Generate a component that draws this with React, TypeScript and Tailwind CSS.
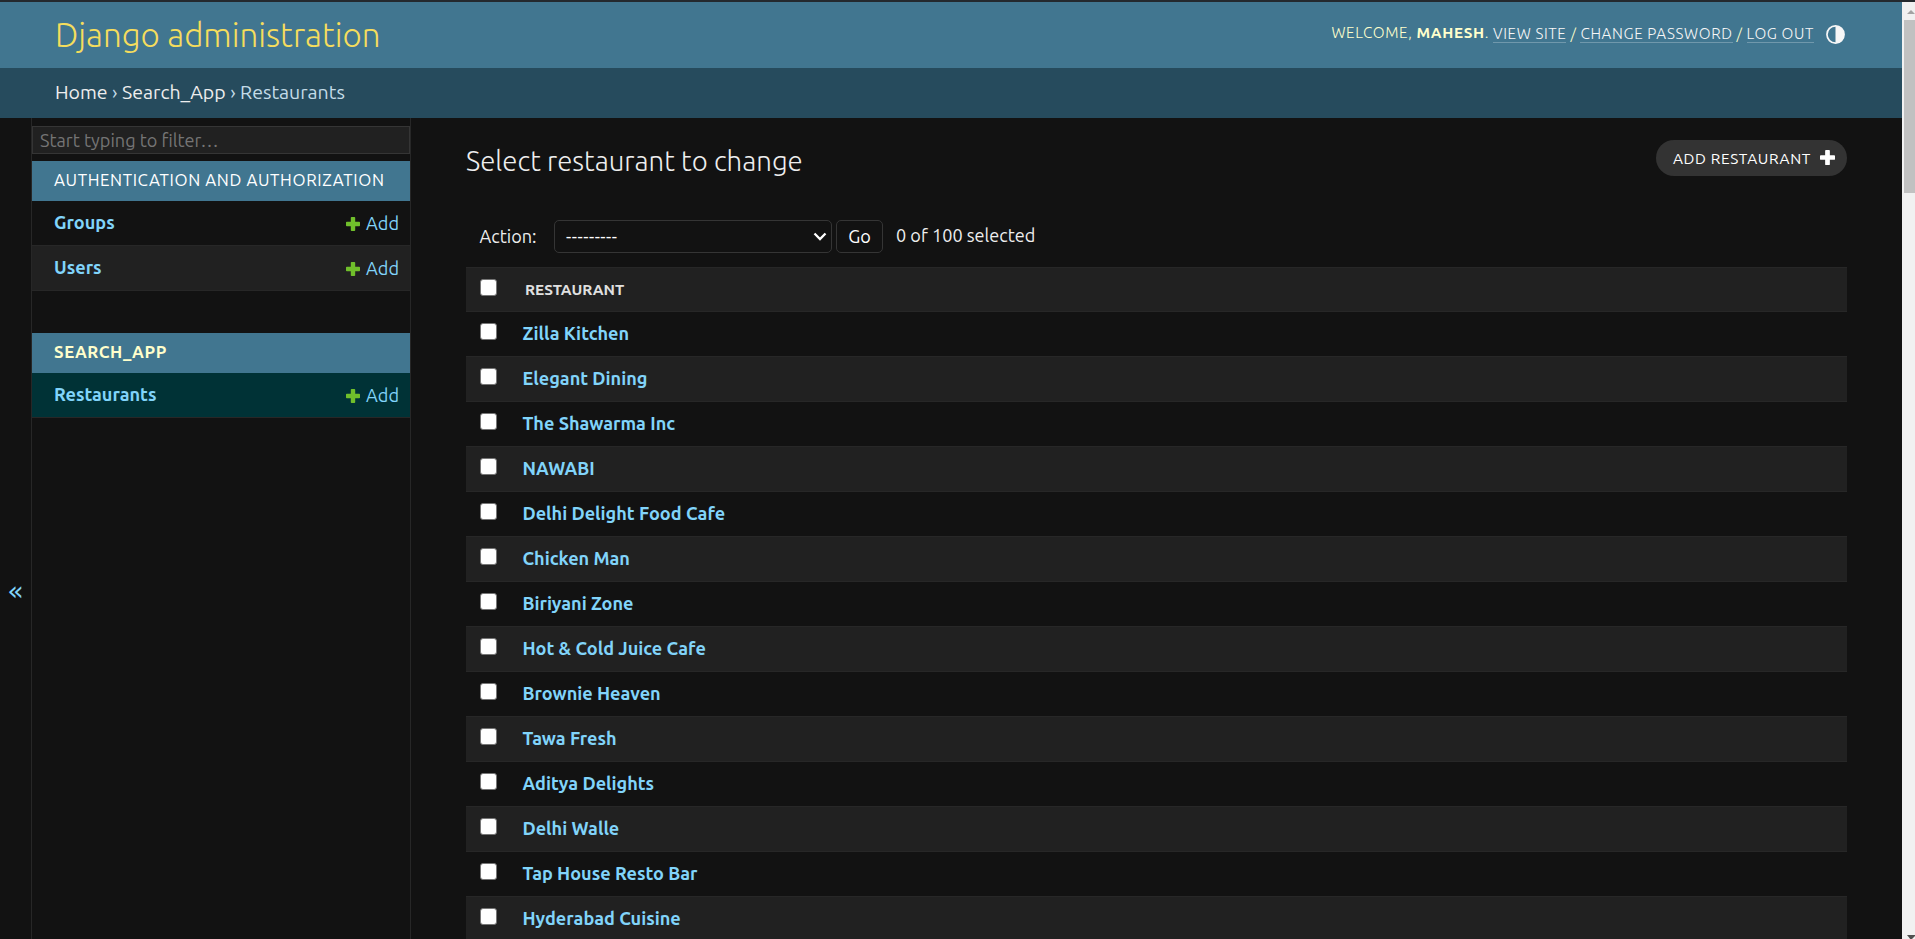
const restaurants = [
  "Zilla Kitchen",
  "Elegant Dining",
  "The Shawarma Inc",
  "NAWABI",
  "Delhi Delight Food Cafe",
  "Chicken Man",
  "Biriyani Zone",
  "Hot & Cold Juice Cafe",
  "Brownie Heaven",
  "Tawa Fresh",
  "Aditya Delights",
  "Delhi Walle",
  "Tap House Resto Bar",
  "Hyderabad Cuisine",
];

function PlusIcon({ className }: { className: string }) {
  return (
    <svg viewBox="0 0 14 14" className={className} aria-hidden="true">
      <path
        fill="currentColor"
        d="M5.6 0h2.8a.8.8 0 0 1 .8.8v4h4a.8.8 0 0 1 .8.8v2.8a.8.8 0 0 1-.8.8h-4v4a.8.8 0 0 1-.8.8H5.6a.8.8 0 0 1-.8-.8v-4h-4a.8.8 0 0 1-.8-.8V5.6a.8.8 0 0 1 .8-.8h4v-4a.8.8 0 0 1 .8-.8z"
      />
    </svg>
  );
}

function Checkbox() {
  return (
    <input
      type="checkbox"
      className="mb-[4px] block size-[17px] shrink-0 appearance-none rounded-[3px] border border-[#767676] bg-white"
    />
  );
}

function ModelRow({ name, className }: { name: string; className: string }) {
  return (
    <div className={`flex h-[45px] items-center border-b border-[#272727] pr-[11px] pl-[22px] text-[#81d4fa] ${className}`}>
      <a className="grow text-[18.1px] font-bold">{name}</a>
      <a className="flex items-center gap-[6px] text-[18.1px]">
        <PlusIcon className="mt-[2px] size-[14px] text-[#70bf2b]" />
        <span className="mt-[2px]">Add</span>
      </a>
    </div>
  );
}

function Header() {
  const link = "border-b border-white/25 leading-[16px] text-[#f7f7f7]";
  return (
    <header className="flex h-[66px] items-center justify-between bg-[#417690] pr-[57px] pl-[55px]">
      <h1 className="pb-[1px] text-[33.15px] font-light text-[#f5dd5d]">Django administration</h1>
      <div className="flex items-center pb-[2px] text-[15.3px] font-light tracking-[0.625px] text-[#ffc]">
        <span>
          WELCOME, <strong className="font-bold">MAHESH</strong>.
        </span>
        <nav className="ml-[4px] flex gap-[4px] pt-[1px] leading-[16px]">
          <a className={link}>VIEW SITE</a>
          <span>/</span>
          <a className={link}>CHANGE PASSWORD</a>
          <span>/</span>
          <a className={link}>LOG OUT</a>
        </nav>
        <svg viewBox="0 0 20 20" className="mt-[1px] ml-[12px] size-[19px]" aria-hidden="true">
          <circle cx="10" cy="10" r="9" fill="none" stroke="#f7f7f7" strokeWidth="1.8" />
          <path d="M10 1a9 9 0 0 1 0 18z" fill="#f7f7f7" />
        </svg>
      </div>
    </header>
  );
}

function Sidebar() {
  return (
    <aside className="flex shrink-0">
      <button className="w-[31px] pt-[125px] font-['DejaVu_Sans',sans-serif] text-[27px] leading-none text-[#81d4fa]">«</button>
      <div className="w-[380px] border-x border-[#272727] pt-[8px]">
        <input
          placeholder="Start typing to filter…"
          className="block h-[28px] w-full border border-[#353535] bg-[#212121] px-[7px] text-[18.1px] placeholder:text-[#757575]"
        />
        <h2 className="mt-[7px] flex h-[40px] items-center bg-[#417690] pb-[2px] pl-[22px] text-[16.83px] tracking-[0.625px] text-white">
          AUTHENTICATION AND AUTHORIZATION
        </h2>
        <ModelRow name="Groups" className="bg-[#121212]" />
        <ModelRow name="Users" className="bg-[#212121]" />
        <h2 className="mt-[42px] flex h-[40px] items-center bg-[#417690] pb-[2px] pl-[22px] text-[16.83px] font-bold tracking-[0.625px] text-[#ffc]">
          SEARCH_APP
        </h2>
        <ModelRow name="Restaurants" className="bg-[#003236]" />
      </div>
    </aside>
  );
}

function Changelist() {
  return (
    <main className="min-w-0 grow pt-[22px] pr-[55px] pl-[55px]">
      <div className="flex h-[80px] items-start justify-between">
        <h2 className="mt-[2px] text-[27.6px] leading-[38px] font-light text-[#eee]">Select restaurant to change</h2>
        <a className="flex h-[36px] items-center gap-[9px] rounded-full bg-[#333] pr-[12px] pl-[17px] text-[15.4px] tracking-[0.625px] text-white">
          <span className="pt-[1px]">ADD RESTAURANT</span>
          <PlusIcon className="mb-[1px] size-[15px]" />
        </a>
      </div>
      <div className="flex h-[33px] items-center pl-[13.5px] text-[18.1px] text-[#eee]">
        <label className="w-[74.5px]">Action:</label>
        <div className="flex h-[33px] w-[278px] items-center justify-between rounded-[5px] border border-[#353535] pr-[4px] pl-[11px] text-white">
          <span className="tracking-[0.5px]">---------</span>
          <svg viewBox="0 0 14 9" className="h-[9px] w-[14px]" aria-hidden="true">
            <path d="M1.5 1.5L7 7l5.5-5.5" fill="none" stroke="#fff" strokeWidth="2.3" />
          </svg>
        </div>
        <button className="ml-[4px] h-[33px] w-[47px] rounded-[5px] border border-[#353535] text-white">Go</button>
        <span className="ml-[13px] pb-[2px]">0 of 100 selected</span>
      </div>
      <div className="mt-[14px]">
        <div className="flex h-[45px] items-center border-y border-[#272727] bg-[#212121] pl-[14px]">
          <Checkbox />
          <span className="pl-[28px] text-[15.4px] font-bold text-[#e0e0e0]">RESTAURANT</span>
        </div>
        <div>
          {restaurants.map((name) => (
            <div key={name} className="flex h-[45px] items-center border-b border-[#272727] pl-[14px] even:bg-[#212121]">
              <Checkbox />
              <a className="pl-[25.5px] text-[18.1px] font-bold text-[#81d4fa]">{name}</a>
            </div>
          ))}
        </div>
      </div>
    </main>
  );
}

function Scrollbar() {
  return (
    <div className="flex w-[13px] shrink-0 flex-col overflow-hidden bg-[#f1f1f1] pl-[2px]">
      <svg viewBox="0 0 11 18" className="h-[18px] w-[11px]" aria-hidden="true">
        <path d="M3 12l4-4 4 4z" fill="#a3a3a3" />
      </svg>
      <div className="h-[173px] bg-[#c1c1c1]" />
      <svg viewBox="0 0 11 6" className="mt-auto h-[6px] w-[11px]" aria-hidden="true">
        <path d="M3 2h8v1l-4 4z" fill="#505050" />
      </svg>
    </div>
  );
}

export default function App() {
  return (
    <div className="flex h-[939px] flex-col overflow-hidden border-t-2 border-[#24292e] bg-[#121212] font-['Ubuntu','Noto_Sans',sans-serif]">
      <div className="flex min-h-0 grow">
        <div className="flex min-w-0 grow flex-col">
          <Header />
          <nav className="flex h-[50px] shrink-0 items-center bg-[#264b5d] pl-[55px] text-[19.5px] whitespace-pre text-[#c4dce8]">
            <a className="text-[#eee]">Home</a> › <a className="text-[#eee]">Search_App</a> › Restaurants
          </nav>
          <div className="flex min-h-0 grow">
            <Sidebar />
            <Changelist />
          </div>
        </div>
        <Scrollbar />
      </div>
    </div>
  );
}
